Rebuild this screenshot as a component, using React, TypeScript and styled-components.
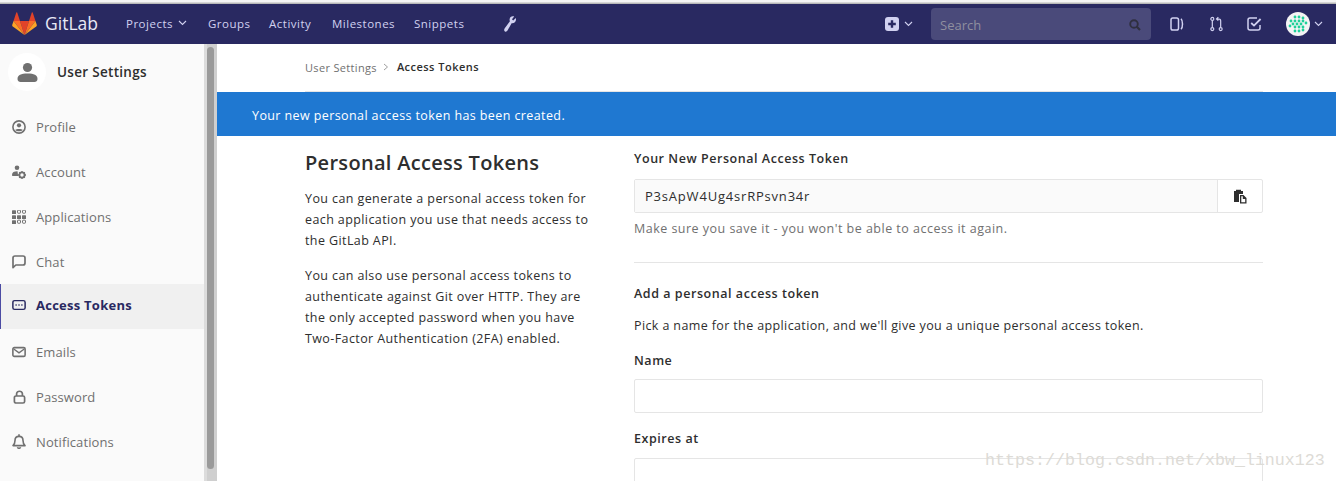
import { ReactNode } from "react";
import styled, { createGlobalStyle } from "styled-components";

const GlobalStyle = createGlobalStyle`
  html, body {
    margin: 0;
    height: 481px;
    overflow: hidden;
    background: #fff;
    font-family: "Open Sans", "Noto Sans", sans-serif;
    font-size: 13px;
    color: #2e2e2e;
  }
  * { box-sizing: border-box; }
`;

const Page = styled.div`
  position: relative;
  width: 1336px;
  height: 481px;
  overflow: hidden;
  display: flex;
  flex-direction: column;
`;

const TopStrip = styled.div`
  height: 4px;
  flex: none;
  background: linear-gradient(#f4f4f4 0, #f4f4f4 2px, #b8b8b8 3px);
`;

const Navbar = styled.header`
  height: 40px;
  flex: none;
  background: #292961;
  display: flex;
  align-items: center;
  padding-left: 12px;
  color: #d1d1f0;
`;

const Brand = styled.div`
  display: flex;
  align-items: center;
  gap: 8px;
  width: 114px;
  flex: none;
  font-size: 17.5px;
  color: #e8e8f6;
  padding-bottom: 2px;
`;

const NavLink = styled.a<{ $width: number }>`
  width: ${(p) => p.$width}px;
  flex: none;
  display: flex;
  align-items: center;
  gap: 5px;
  font-size: 11.5px;
  letter-spacing: 0.5px;
  font-weight: 500;
  white-space: nowrap;
  padding-bottom: 2px;
`;

const WrenchSlot = styled.div`
  margin-left: 11px;
  display: flex;
  margin-right: auto;
`;

const NewSlot = styled.div`
  display: flex;
  align-items: center;
  gap: 5px;
  margin-right: 18px;
`;

const SearchBox = styled.div`
  width: 220px;
  height: 32px;
  border-radius: 4px;
  background: #4a4a7a;
  display: flex;
  align-items: center;
  justify-content: space-between;
  padding: 1px 10px 0 9px;
  margin-right: 19px;
  color: #8f8f9f;
  font-size: 13px;
`;

const IconSlot = styled.div<{ $gap: number }>`
  display: flex;
  margin-right: ${(p) => p.$gap}px;
`;

const Avatar = styled.div`
  width: 24px;
  height: 24px;
  border-radius: 50%;
  overflow: hidden;
  background: #f4f4f4;
  display: flex;
`;

const AvatarSlot = styled.div`
  display: flex;
  align-items: center;
  gap: 4px;
  margin-right: 13px;
`;

const Body = styled.div`
  flex: 1;
  display: flex;
  min-height: 0;
`;

const Sidebar = styled.aside`
  width: 204px;
  flex: none;
  background: #fafafa;
  display: flex;
  flex-direction: column;
`;

const SidebarHead = styled.div`
  height: 60px;
  flex: none;
  padding: 9px 0 0 8px;
  display: flex;
  align-items: flex-start;
  gap: 11px;
  font-weight: 600;
  font-size: 13.5px;
  letter-spacing: 0.3px;
  color: #2e2e2e;
`;

const HeadAvatar = styled.div`
  width: 38px;
  height: 38px;
  border-radius: 50%;
  background: #fff;
  display: flex;
  align-items: center;
  justify-content: center;
`;

const HeadTitle = styled.span`
  line-height: 38px;
`;

const SideList = styled.nav`
  display: flex;
  flex-direction: column;
`;

const SideItem = styled.a<{ $active?: boolean }>`
  height: 45px;
  flex: none;
  display: flex;
  align-items: center;
  gap: 10px;
  padding-left: ${(p) => (p.$active ? 11 : 12)}px;
  padding-bottom: ${(p) => (p.$active ? 3 : 0)}px;
  font-size: 13px;
  letter-spacing: ${(p) => (p.$active ? 0.25 : 0.1)}px;
  color: ${(p) => (p.$active ? "#292961" : "#707070")};
  font-weight: ${(p) => (p.$active ? 700 : 400)};
  background: ${(p) => (p.$active ? "#f0f0f0" : "transparent")};
  border-left: ${(p) => (p.$active ? "1px solid #4b4ba3" : "none")};
`;

const IconBox = styled.span`
  width: 14px;
  display: flex;
  justify-content: center;
  flex: none;
`;

const Scrollbar = styled.div`
  width: 13px;
  flex: none;
  background: linear-gradient(90deg, #dcdcdc 0 3px, #cfcfcf 3px);
  padding: 3px 3px 0 3px;
`;

const ScrollThumb = styled.div`
  width: 7px;
  height: 422px;
  border-radius: 4px;
  background: #9a9a9a;
`;

const Main = styled.main`
  flex: 1;
  display: flex;
  flex-direction: column;
  min-width: 0;
`;

const Breadcrumbs = styled.div`
  height: 48px;
  flex: none;
  margin-left: 88px;
  width: 958px;
  border-bottom: 1px solid #e5e5e5;
  display: flex;
  align-items: center;
  gap: 6px;
  font-size: 11px;
  letter-spacing: 0.33px;
  color: #707070;
  padding-bottom: 1px;
`;

const CrumbCurrent = styled.span`
  color: #2e2e2e;
  font-weight: 600;
  letter-spacing: 0.47px;
  margin-left: 2px;
  margin-top: -1px;
`;

const Flash = styled.div`
  height: 44px;
  flex: none;
  background: #1f78d1;
  color: #fff;
  display: flex;
  align-items: center;
  padding: 2px 0 0 35px;
  font-size: 12.5px;
  letter-spacing: 0.4px;
`;

const Content = styled.div`
  display: flex;
  padding-left: 88px;
  flex: 1;
`;

const LeftCol = styled.section`
  width: 329px;
  flex: none;
  padding-top: 14px;
`;

const PageTitle = styled.h4`
  margin: 0 0 12px;
  font-size: 20px;
  line-height: 26px;
  letter-spacing: 0.3px;
  font-weight: 600;
  color: #2e2e2e;
`;

const Para = styled.p`
  margin: 0 0 14px;
  width: 290px;
  font-size: 12.5px;
  line-height: 21px;
  letter-spacing: 0.4px;
`;

const RightCol = styled.section`
  width: 629px;
  flex: none;
  padding-top: 14px;
`;

const Label = styled.div<{ $mb: number }>`
  font-weight: 600;
  font-size: 12.5px;
  line-height: 17px;
  letter-spacing: 0.55px;
  margin-bottom: ${(p) => p.$mb}px;
`;

const TokenGroup = styled.div`
  height: 34px;
  display: flex;
  border: 1px solid #e5e5e5;
  border-radius: 2px;
`;

const TokenValue = styled.div`
  flex: 1;
  background: #fafafa;
  border-right: 1px solid #e5e5e5;
  padding-left: 10px;
  display: flex;
  align-items: center;
  font-size: 13px;
  letter-spacing: 0.8px;
`;

const CopyBtn = styled.div`
  width: 44px;
  display: flex;
  align-items: center;
  justify-content: center;
`;

const Hint = styled.div`
  margin-top: 7px;
  font-size: 12.5px;
  line-height: 17px;
  letter-spacing: 0.48px;
  color: #707070;
`;

const Rule = styled.hr`
  margin: 25px 0 22px;
  border: 0;
  border-top: 1px solid #e5e5e5;
`;

const Lead = styled.div`
  font-size: 12.5px;
  line-height: 17px;
  letter-spacing: 0.38px;
  margin-bottom: 18px;
`;

const Input = styled.div<{ $mb: number }>`
  height: 34px;
  border: 1px solid #e5e5e5;
  border-radius: 2px;
  background: #fff;
  margin-bottom: ${(p) => p.$mb}px;
`;

const Watermark = styled.div`
  position: absolute;
  left: 985px;
  top: 450px;
  font-family: "Liberation Mono", monospace;
  font-size: 16.67px;
  line-height: 22px;
  color: #dddbd6;
  white-space: nowrap;
`;

const Tanuki = () => (
  <svg width="25" height="23" viewBox="0 0 25 23">
    <path d="M12.5 23 L17 9 H8 Z" fill="#e24329" />
    <path d="M12.5 23 L8 9 H1.5 Z" fill="#fc6d26" />
    <path d="M1.5 9 L0.2 13 Q0 14 0.8 14.6 L12.5 23 Z" fill="#fca326" />
    <path d="M1.5 9 H8 L5.2 0.6 Q4.8 0 4.3 0.6 Z" fill="#e24329" />
    <path d="M12.5 23 L17 9 H23.5 Z" fill="#fc6d26" />
    <path d="M23.5 9 L24.8 13 Q25 14 24.2 14.6 L12.5 23 Z" fill="#fca326" />
    <path d="M23.5 9 H17 L19.8 0.6 Q20.2 0 20.7 0.6 Z" fill="#e24329" />
  </svg>
);

const Chevron = () => (
  <svg width="9" height="6" viewBox="0 0 9 6">
    <path d="M1 1 L4.5 4.5 L8 1" fill="none" stroke="#d1d1f0" strokeWidth="1.1" />
  </svg>
);

const Wrench = () => (
  <svg width="14" height="16" viewBox="0 0 14 16">
    <path
      d="M12.8 1.9 L10.2 4.4 L9 3.2 L11.2 .6 C9 -.2 6.8 1 6.6 3.3 C6.5 4.2 6.7 4.8 6.9 5.3 L1.6 12.6 C.8 13.8 1.2 15 2 15.5 C2.9 16 3.9 15.6 4.5 14.6 L8.6 7.2 C11.2 7.6 13.8 5.4 12.8 1.9 Z"
      fill="#d1d1f0"
    />
  </svg>
);

const PlusSquare = () => (
  <svg width="14" height="14" viewBox="0 0 14 14">
    <rect width="14" height="14" rx="3" fill="#d1d1f0" />
    <path d="M7 3.2 V10.8 M3.2 7 H10.8" stroke="#292961" strokeWidth="2.4" />
  </svg>
);

const SearchIcon = () => (
  <svg width="12" height="12" viewBox="0 0 12 12">
    <circle cx="5" cy="5" r="3.8" fill="none" stroke="#2f2f3f" strokeWidth="1.9" />
    <path d="M7.8 7.8 L11 11" stroke="#2f2f3f" strokeWidth="2.2" />
  </svg>
);

const IssuesIcon = () => (
  <svg width="14" height="14" viewBox="0 0 14 14" fill="none" stroke="#d1d1f0" strokeWidth="1.5">
    <rect x="1" y="1" width="7.5" height="12" rx="1.8" />
    <path d="M11 1.8 C13 3.5 13 10.5 11 12.2" />
  </svg>
);

const MergeIcon = () => (
  <svg width="13" height="16" viewBox="0 0 14 16" fill="none" stroke="#d1d1f0" strokeWidth="1.3">
    <circle cx="2.5" cy="2.5" r="1.6" />
    <circle cx="2.5" cy="13.5" r="1.6" />
    <circle cx="11.5" cy="13.5" r="1.6" />
    <path d="M2.5 4.2 V11.8 M11.5 11.8 V4.5 C11.5 3 10.5 2.5 8 2.5 M9 .7 L7 2.5 L9 4.3" />
  </svg>
);

const TodoIcon = () => (
  <svg width="15" height="14" viewBox="0 0 15 14" fill="none" stroke="#d1d1f0" strokeWidth="1.5">
    <path d="M13 8 V11 C13 12.2 12.2 13 11 13 H3 C1.8 13 1 12.2 1 11 V3 C1 1.8 1.8 1 3 1 H10" />
    <path d="M4.2 6 L7 8.6 L13.6 2" strokeWidth="1.8" />
  </svg>
);

const identiconDots = [
  [5, 9], [9, 5], [13, 5], [17, 6], [9, 9], [13, 9], [17, 9], [20, 11], [7, 12], [11, 12], [15, 12],
  [4, 14], [9, 15], [13, 15], [17, 15], [9, 19], [13, 19], [17, 18],
];

const Identicon = () => (
  <svg width="24" height="24" viewBox="0 0 24 24">
    {identiconDots.map(([x, y]) => (
      <circle key={`${x}-${y}`} cx={x} cy={y} r="1.4" fill="#1fd19a" />
    ))}
  </svg>
);

const UserGlyph = () => (
  <svg width="21" height="21" viewBox="0 0 21 21" fill="#707070">
    <circle cx="10.5" cy="5.5" r="4.6" />
    <path d="M.5 17 C.5 13 4 11.5 10.5 11.5 C17 11.5 20.5 13 20.5 17 C20.5 19 19 20 17.5 20 H3.5 C2 20 .5 19 .5 17 Z" />
  </svg>
);

const ProfileIcon = () => (
  <svg width="14" height="14" viewBox="0 0 14 14">
    <circle cx="7" cy="7" r="6.1" fill="none" stroke="#707070" strokeWidth="1.6" />
    <circle cx="7" cy="5.3" r="2.1" fill="#707070" />
    <path d="M3.2 10 C4.5 8.6 9.5 8.6 10.8 10 C9.5 11.7 4.5 11.7 3.2 10 Z" fill="#707070" />
  </svg>
);

const AccountIcon = () => (
  <svg width="14" height="14" viewBox="0 0 14 14" fill="#707070">
    <circle cx="5" cy="2.8" r="2.3" />
    <path d="M0 10 C0 7.2 2 6.2 5.5 6.2 L6.2 11 H1 C.4 11 0 10.6 0 10 Z" />
    <circle cx="10" cy="10" r="2.6" fill="none" stroke="#707070" strokeWidth="1.8" />
    <path d="M10 6 V7.2 M10 12.8 V14 M6 10 H7.2 M12.8 10 H14 M7.2 7.2 L8 8 M12 12 L12.8 12.8 M7.2 12.8 L8 12 M12 8 L12.8 7.2" stroke="#707070" strokeWidth="1.3" />
  </svg>
);

const AppsIcon = () => (
  <svg width="14" height="14" viewBox="0 0 14 14">
    {[0, 5, 10].flatMap((y, r) =>
      [0, 5, 10].map((x, c) => (
        <rect
          key={`${r}-${c}`}
          x={x + (r === 1 || c === 0 ? 0 : 0.5)}
          y={y + 0.2}
          width={r === 1 || c === 0 ? 4 : 3}
          height={r === 1 || c === 0 ? 3.8 : 3}
          rx=".6"
          fill={r === 1 || c === 0 ? "#707070" : "none"}
          stroke="#707070"
          strokeWidth={r === 1 || c === 0 ? 0 : 1}
        />
      ))
    )}
  </svg>
);

const ChatIcon = () => (
  <svg width="14" height="14" viewBox="0 0 14 14">
    <path
      d="M1 12.6 V3 C1 1.8 1.8 1 3 1 H11 C12.2 1 13 1.8 13 3 V8 C13 9.2 12.2 10 11 10 H3.8 Z"
      fill="none"
      stroke="#707070"
      strokeWidth="1.7"
      strokeLinejoin="round"
    />
  </svg>
);

const TokenIcon = () => (
  <svg width="16" height="12" viewBox="0 0 16 12">
    <rect x="1" y="1" width="14" height="10" rx="2" fill="none" stroke="#292961" strokeWidth="1.7" />
    <path d="M4 6 H5.4 M7.3 6 H8.7 M10.6 6 H12" stroke="#292961" strokeWidth="1.5" />
  </svg>
);

const MailIcon = () => (
  <svg width="16" height="12" viewBox="0 0 16 12" fill="none" stroke="#707070">
    <rect x="1" y="1" width="14" height="10" rx="1.6" strokeWidth="1.8" />
    <path d="M2 2.5 L8 7 L14 2.5" strokeWidth="1.6" />
  </svg>
);

const LockIcon = () => (
  <svg width="13" height="14" viewBox="0 0 13 14" fill="none" stroke="#707070" strokeWidth="1.7">
    <rect x="1.4" y="6" width="10.2" height="7" rx="1.6" />
    <path d="M3.6 6 V3.8 C3.6 .4 9.4 .4 9.4 3.8 V6" />
  </svg>
);

const BellIcon = () => (
  <svg width="14" height="15" viewBox="0 0 14 15" fill="none" stroke="#707070" strokeWidth="1.6">
    <path d="M1 11.6 C3 9.8 3 8 3 6.5 C3 4 4.6 2.4 7 2.4 C9.4 2.4 11 4 11 6.5 C11 8 11 9.8 13 11.6 Z" strokeLinejoin="round" />
    <path d="M7 .3 V2 M5.4 13.2 C6 14.6 8 14.6 8.6 13.2" />
  </svg>
);

const CopyIcon = () => (
  <svg width="14" height="15" viewBox="0 0 14 15" fill="#2e2e2e">
    <path d="M1 2 H3 V.8 H8 V2 H10 V5 H6 V13 H1 Z" />
    <path d="M7 6 H10.5 L13.5 9 V14.5 H7 Z M8.3 7.3 V13.2 H12.2 V10 H9.8 V7.3 Z" fillRule="evenodd" />
  </svg>
);

const sideItems: { label: string; icon: ReactNode; active?: boolean }[] = [
  { label: "Profile", icon: <ProfileIcon /> },
  { label: "Account", icon: <AccountIcon /> },
  { label: "Applications", icon: <AppsIcon /> },
  { label: "Chat", icon: <ChatIcon /> },
  { label: "Access Tokens", icon: <TokenIcon />, active: true },
  { label: "Emails", icon: <MailIcon /> },
  { label: "Password", icon: <LockIcon /> },
  { label: "Notifications", icon: <BellIcon /> },
];

export default function App() {
  return (
    <Page>
      <GlobalStyle />
      <TopStrip />
      <Navbar>
        <Brand>
          <Tanuki />
          GitLab
        </Brand>
        <NavLink $width={82}>
          Projects <Chevron />
        </NavLink>
        <NavLink $width={61}>Groups</NavLink>
        <NavLink $width={63}>Activity</NavLink>
        <NavLink $width={82}>Milestones</NavLink>
        <NavLink $width={78}>Snippets</NavLink>
        <WrenchSlot>
          <Wrench />
        </WrenchSlot>
        <NewSlot>
          <PlusSquare />
          <Chevron />
        </NewSlot>
        <SearchBox>
          Search
          <SearchIcon />
        </SearchBox>
        <IconSlot $gap={26}>
          <IssuesIcon />
        </IconSlot>
        <IconSlot $gap={24}>
          <MergeIcon />
        </IconSlot>
        <IconSlot $gap={24}>
          <TodoIcon />
        </IconSlot>
        <AvatarSlot>
          <Avatar>
            <Identicon />
          </Avatar>
          <Chevron />
        </AvatarSlot>
      </Navbar>
      <Body>
        <Sidebar>
          <SidebarHead>
            <HeadAvatar>
              <UserGlyph />
            </HeadAvatar>
            <HeadTitle>User Settings</HeadTitle>
          </SidebarHead>
          <SideList>
            {sideItems.map((item) => (
              <SideItem key={item.label} $active={item.active}>
                <IconBox>{item.icon}</IconBox>
                {item.label}
              </SideItem>
            ))}
          </SideList>
        </Sidebar>
        <Scrollbar>
          <ScrollThumb />
        </Scrollbar>
        <Main>
          <Breadcrumbs>
            User Settings
            <svg width="6" height="8" viewBox="0 0 6 8">
              <path d="M1 1 L4.5 4 L1 7" fill="none" stroke="#a0a0a0" strokeWidth="1" />
            </svg>
            <CrumbCurrent>Access Tokens</CrumbCurrent>
          </Breadcrumbs>
          <Flash>Your new personal access token has been created.</Flash>
          <Content>
            <LeftCol>
              <PageTitle>Personal Access Tokens</PageTitle>
              <Para>You can generate a personal access token for each application you use that needs access to the GitLab API.</Para>
              <Para>You can also use personal access tokens to authenticate against Git over HTTP. They are the only accepted password when you have Two-Factor Authentication (2FA) enabled.</Para>
            </LeftCol>
            <RightCol>
              <Label $mb={12}>Your New Personal Access Token</Label>
              <TokenGroup>
                <TokenValue>P3sApW4Ug4srRPsvn34r</TokenValue>
                <CopyBtn>
                  <CopyIcon />
                </CopyBtn>
              </TokenGroup>
              <Hint>Make sure you save it - you won't be able to access it again.</Hint>
              <Rule />
              <Label $mb={15}>Add a personal access token</Label>
              <Lead>Pick a name for the application, and we'll give you a unique personal access token.</Lead>
              <Label $mb={10}>Name</Label>
              <Input $mb={17} />
              <Label $mb={11}>Expires at</Label>
              <Input $mb={0} />
            </RightCol>
          </Content>
        </Main>
      </Body>
      <Watermark>https://blog.csdn.net/xbw_linux123</Watermark>
    </Page>
  );
}
